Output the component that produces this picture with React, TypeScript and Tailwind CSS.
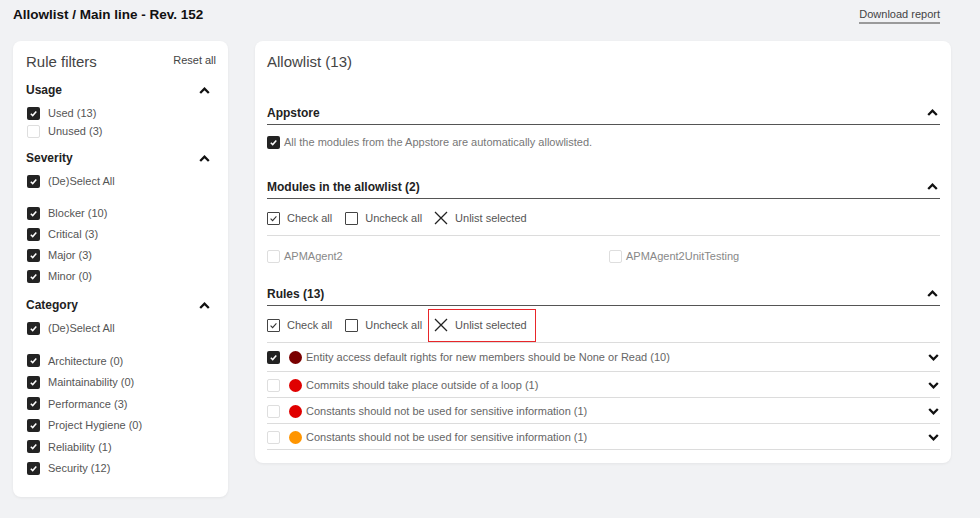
import React from "react";

const font = "font-['Liberation_Sans',Arial,sans-serif]";

function ChevronUp() {
  return (
    <svg width="11" height="7" viewBox="0 0 11 7" className="shrink-0">
      <polyline points="1.2,6 5.5,1.7 9.8,6" fill="none" stroke="#111" strokeWidth="2.3" />
    </svg>
  );
}

function ChevronDown() {
  return (
    <svg width="11" height="7" viewBox="0 0 11 7" className="shrink-0">
      <polyline points="1.2,1 5.5,5.3 9.8,1" fill="none" stroke="#111" strokeWidth="2.3" />
    </svg>
  );
}

function Box({ checked }: { checked: boolean }) {
  if (checked) {
    return (
      <span className="flex h-[13px] w-[13px] shrink-0 items-center justify-center rounded-[2px] bg-[#232323]">
        <svg width="9" height="9" viewBox="0 0 9 9">
          <polyline points="1.8,4.8 3.7,6.6 7.3,2.6" fill="none" stroke="#fff" strokeWidth="1.5" />
        </svg>
      </span>
    );
  }
  return <span className="h-[13px] w-[13px] shrink-0 rounded-[2px] border border-[#dedede] bg-white" />;
}

function FilterItem({ label, h = "h-[21.5px]" }: { label: string; h?: string }) {
  return (
    <div className={`flex items-center gap-2 ${h} pl-[1px] text-[11px] text-[#555]`}>
      <Box checked />
      <span>{label}</span>
    </div>
  );
}

function FilterHeading({ title }: { title: string }) {
  return (
    <div className="flex h-[20px] items-center justify-between pr-[6px]">
      <span className="text-[12px] font-bold text-[#222]">{title}</span>
      <ChevronUp />
    </div>
  );
}

function SectionHeading({ title }: { title: string }) {
  return (
    <div className="flex h-[24px] items-center justify-between border-b border-[#555] pr-[2px]">
      <span className="text-[12px] font-bold text-[#222]">{title}</span>
      <ChevronUp />
    </div>
  );
}

const unlistPlain = "ml-[6px] flex h-[33px] items-center gap-[7px] border border-transparent pl-[5px] pr-[8px]";
const unlistRed = "ml-[6px] flex h-[33px] items-center gap-[7px] border border-[#e8262a] pl-[5px] pr-[8px]";

function ActionRow({ highlight }: { highlight?: boolean }) {
  return (
    <div className="flex h-[37px] items-center border-b border-[#dcdcdc] pt-[2px] text-[11px] text-[#555]">
      <span className="flex items-center gap-[7px]">
        <span className="flex h-[13px] w-[13px] items-center justify-center rounded-[1px] border border-[#444]">
          <svg width="9" height="9" viewBox="0 0 9 9">
            <polyline points="1.6,4.6 3.6,6.6 7.4,2.4" fill="none" stroke="#333" strokeWidth="1.1" />
          </svg>
        </span>
        Check all
      </span>
      <span className="ml-[13px] flex items-center gap-[7px]">
        <span className="h-[13px] w-[13px] rounded-[1px] border border-[#444]" />
        Uncheck all
      </span>
      <span className={highlight ? unlistRed : unlistPlain}>
        <svg width="14" height="14" viewBox="0 0 14 14">
          <path d="M1 1 L13 13 M13 1 L1 13" stroke="#222" strokeWidth="1.3" fill="none" />
        </svg>
        Unlist selected
      </span>
    </div>
  );
}

const rules = [
  { checked: true, color: "bg-[#7a0000]", text: "Entity access default rights for new members should be None or Read (10)" },
  { checked: false, color: "bg-[#e00000]", text: "Commits should take place outside of a loop (1)" },
  { checked: false, color: "bg-[#e00000]", text: "Constants should not be used for sensitive information (1)" },
  { checked: false, color: "bg-[#ff9500]", text: "Constants should not be used for sensitive information (1)" },
];

export default function App() {
  return (
    <div className={`${font} min-h-[518px] bg-[#f1f2f4] text-[#222]`}>
      <div className="flex h-[30px] items-center justify-between pl-[13px] pr-[40px]">
        <h1 className="text-[13.5px] font-bold text-[#111]">Allowlist / Main line - Rev. 152</h1>
        <a className="mt-[1px] border-b-2 border-[#9a9a9a] pb-[1px] text-[11px] leading-[14px] text-[#444]">
          Download report
        </a>
      </div>

      <div className="mt-[11px] flex items-start gap-[27px] px-[13px]">
        {/* filters */}
        <aside className="w-[215px] rounded-[8px] bg-white pb-[18px] pl-[13px] pr-[12px] pt-[9px] shadow-[0_1px_3px_rgba(0,0,0,0.06)]">
          <div className="flex h-[24px] items-center justify-between">
            <span className="text-[15px] text-[#444]">Rule filters</span>
            <span className="-mt-[3px] text-[11px] text-[#444]">Reset all</span>
          </div>

          <div className="mt-[6px]">
            <FilterHeading title="Usage" />
            <div className="pt-[4px]">
              <FilterItem label="Used (13)" h="h-[18px]" />
              <div className="flex h-[18px] items-center gap-2 pl-[1px] text-[11px] text-[#555]">
                <Box checked={false} />
                <span>Unused (3)</span>
              </div>
            </div>
          </div>

          <div className="mt-[8px]">
            <FilterHeading title="Severity" />
            <div className="pt-[4px]">
              <FilterItem label="(De)Select All" h="h-[18px]" />
            </div>
            <div className="pt-[13px]">
              {["Blocker (10)", "Critical (3)", "Major (3)", "Minor (0)"].map((l) => (
                <FilterItem key={l} label={l} h="h-[21px]" />
              ))}
            </div>
          </div>

          <div className="mt-[8px]">
            <FilterHeading title="Category" />
            <div className="pt-[4px]">
              <FilterItem label="(De)Select All" h="h-[18px]" />
            </div>
            <div className="pt-[13px]">
              {[
                "Architecture (0)",
                "Maintainability (0)",
                "Performance (3)",
                "Project Hygiene (0)",
                "Reliability (1)",
                "Security (12)",
              ].map((l) => (
                <FilterItem key={l} label={l} />
              ))}
            </div>
          </div>
        </aside>

        {/* allowlist */}
        <main className="w-[696px] rounded-[8px] bg-white pb-[13px] pl-[12px] pr-[11px] pt-[9px] shadow-[0_1px_3px_rgba(0,0,0,0.06)]">
          <div className="flex h-[24px] items-center">
            <span className="text-[15px] text-[#444]">Allowlist (13)</span>
          </div>

          <div className="mt-[27px]">
            <SectionHeading title="Appstore" />
            <div className="mt-[8px] flex h-[18px] items-center gap-[4px] text-[11px] text-[#777]">
              <Box checked />
              <span>All the modules from the Appstore are automatically allowlisted.</span>
            </div>
          </div>

          <div className="mt-[24px]">
            <SectionHeading title="Modules in the allowlist (2)" />
            <ActionRow />
            <div className="mt-[11px] grid h-[18px] grid-cols-[342px_1fr] items-center text-[11px] text-[#888]">
              <div className="flex items-center gap-[4px]">
                <Box checked={false} />
                <span>APMAgent2</span>
              </div>
              <div className="flex items-center gap-[4px]">
                <Box checked={false} />
                <span>APMAgent2UnitTesting</span>
              </div>
            </div>
          </div>

          <div className="mt-[17px]">
            <SectionHeading title="Rules (13)" />
            <ActionRow highlight />
            {rules.map((r, i) => (
              <div
                key={i}
                className={
                  i === 0
                    ? "flex h-[29px] items-center border-b border-[#dcdcdc] pr-[1px] pt-[1px] text-[11px] text-[#666]"
                    : "flex h-[26px] items-center border-b border-[#dcdcdc] pr-[1px] pt-[1px] text-[11px] text-[#666]"
                }
              >
                <Box checked={r.checked} />
                <span className={`ml-[9px] h-[13px] w-[13px] shrink-0 rounded-full ${r.color}`} />
                <span className="ml-[4px] flex-1">{r.text}</span>
                <ChevronDown />
              </div>
            ))}
          </div>
        </main>
      </div>
    </div>
  );
}
